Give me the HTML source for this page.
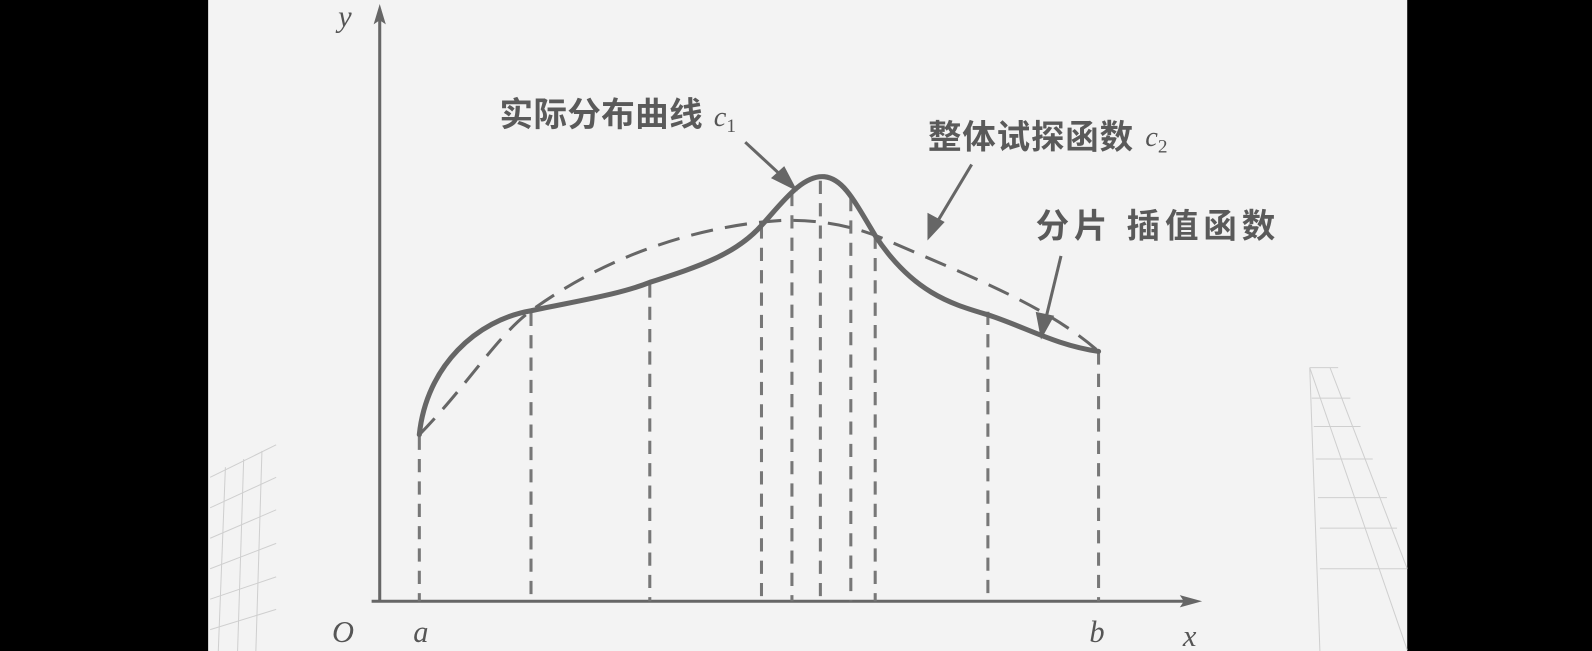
<!DOCTYPE html>
<html><head><meta charset="utf-8"><style>
html,body{margin:0;padding:0;background:#000;width:1592px;height:651px;overflow:hidden}
svg{display:block}
.cn{font-family:"Liberation Sans","Noto Sans CJK SC",sans-serif;font-weight:bold;fill:#5a5a5a}
.it{font-family:"Liberation Serif",serif;font-style:italic;fill:#555}
</style></head><body>
<svg width="1592" height="651" viewBox="0 0 1568 641" preserveAspectRatio="none">
<rect x="0" y="0" width="1568" height="641" fill="#000"/>
<rect x="205" y="0" width="1181" height="641" fill="#f3f3f3"/>
<g stroke="#cfcfcf" stroke-width="1" fill="none">
<path d="M207 470 L272 438 M207 500 L272 470 M207 530 L272 502 M207 560 L272 535 M207 590 L272 568 M207 620 L272 600"/>
<path d="M222 460 L215 641 M240 452 L234 641 M258 444 L252 641"/>
<path d="M1290 362 L1318 362 M1292 392 L1330 392 M1294 420 L1340 420 M1296 452 L1352 452 M1298 490 L1366 490 M1300 520 L1376 520 M1300 560 L1386 560"/>
<path d="M1290 362 L1386 640 M1310 362 L1386 560 M1290 362 L1300 641"/>
</g>
<g stroke="#666" stroke-width="3" fill="none">
<line x1="374" y1="14" x2="374" y2="593"/>
<line x1="366" y1="592" x2="1175" y2="592"/>
</g>
<path d="M374 4 L368 24 L374 20 L380 24 Z" fill="#666"/>
<path d="M1184 592 L1162 586 L1166 592 L1162 598 Z" fill="#666"/>
<g stroke="#777" stroke-width="3" stroke-dasharray="13 9" fill="none">
<line x1="413" y1="430" x2="413" y2="592"/>
<line x1="523" y1="308" x2="523" y2="592"/>
<line x1="640" y1="280" x2="640" y2="592"/>
<line x1="750" y1="222" x2="750" y2="592"/>
<line x1="780" y1="190" x2="780" y2="592"/>
<line x1="808" y1="178" x2="808" y2="592"/>
<line x1="838" y1="195" x2="838" y2="592"/>
<line x1="862" y1="232" x2="862" y2="592"/>
<line x1="973" y1="307" x2="973" y2="592"/>
<line x1="1082" y1="346" x2="1082" y2="592"/>
</g>
<path d="M413 428 C460 380 490 330 523 306 C600 250 690 222 770 217 C810 216 845 224 870 235 C950 270 1030 300 1082 346" stroke="#666" stroke-width="3" stroke-dasharray="22 12" fill="none"/>
<path d="M413 428 C420 360 470 315 523 306 C570 296 610 290 640 278 C690 262 725 250 750 222 C770 200 790 172 812 174 C830 176 840 195 862 232 C900 290 940 300 973 310 C1010 322 1040 340 1082 346" stroke="#666" stroke-width="5" fill="none" stroke-linecap="round"/>
<g stroke="#666" stroke-width="3" fill="#666">
<line x1="734" y1="140" x2="774" y2="177"/>
<path d="M782 185 L762 175 L772 166 Z"/>
<line x1="957" y1="162" x2="921" y2="222"/>
<path d="M915 233 L915 212 L928 219 Z"/>
<line x1="1045" y1="252" x2="1029" y2="318"/>
<path d="M1026 330 L1022 309 L1036 312 Z"/>
</g>
<text class="cn" x="492" y="124" font-size="33" textLength="200">实际分布曲线</text>
<text class="it" x="703" y="124" font-size="28">c<tspan font-size="19" dy="6" font-style="normal">1</tspan></text>
<text class="cn" x="914" y="146" font-size="33" textLength="202">整体试探函数</text>
<text class="it" x="1128" y="144" font-size="28">c<tspan font-size="19" dy="6" font-style="normal">2</tspan></text>
<text class="cn" x="1020" y="234" font-size="33" textLength="236">分片 插值函数</text>
<text class="it" x="333" y="26" font-size="30">y</text>
<text class="it" x="327" y="632" font-size="30">O</text>
<text class="it" x="407" y="632" font-size="30">a</text>
<text class="it" x="1073" y="632" font-size="30">b</text>
<text class="it" x="1165" y="636" font-size="30">x</text>
</svg>
</body></html>
